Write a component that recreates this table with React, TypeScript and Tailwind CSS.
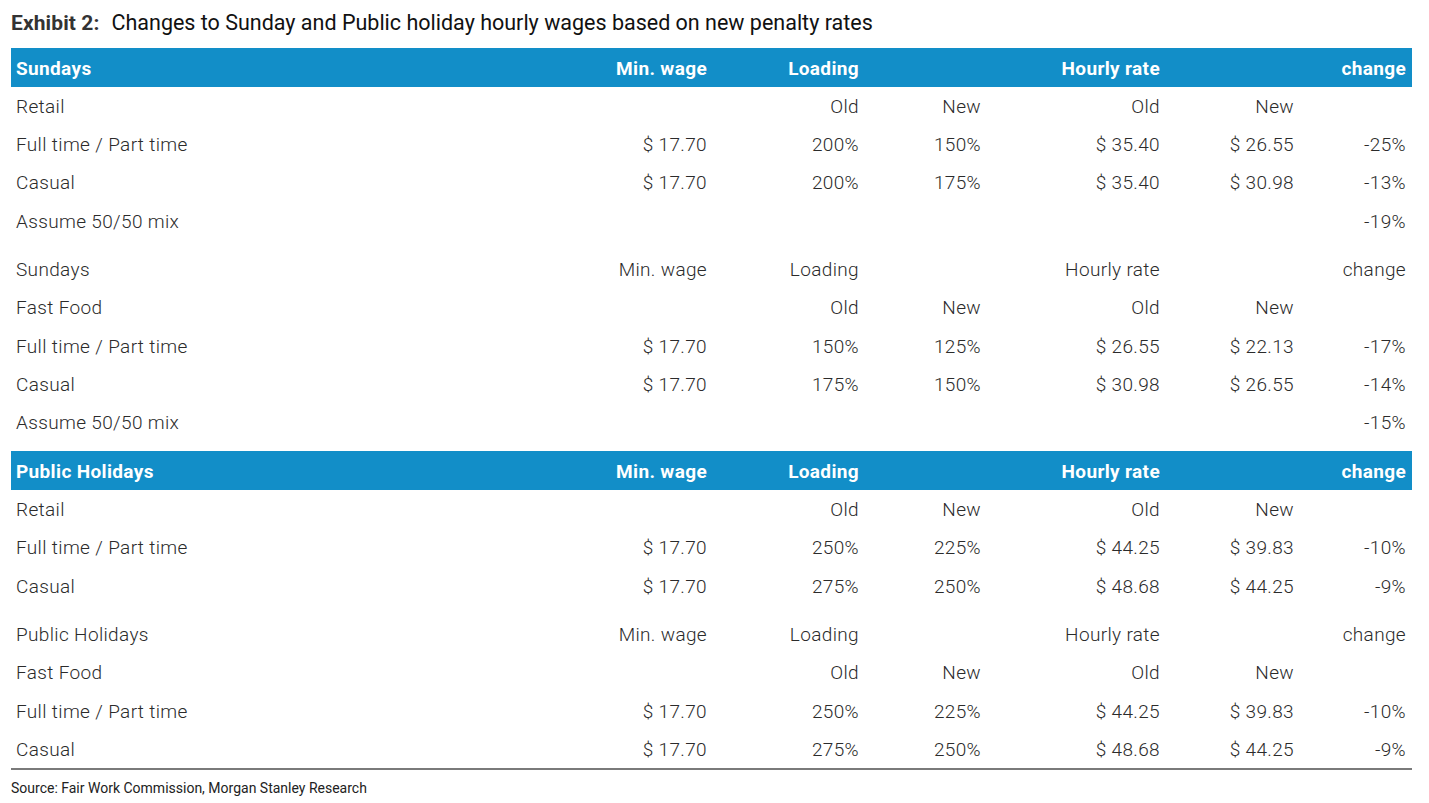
import React from "react";

type Row = { label: string; cells: string[] };

const COLS = "grid grid-cols-[minmax(0,1fr)_140px_152px_122px_179px_134px_112px] pl-[5px] pr-[6px] pt-[3px]";

const HEAD = ["Min. wage", "Loading", "", "Hourly rate", "", "change"];
const SUB = ["", "Old", "New", "Old", "New", ""];

const sections: { title: string; groups: { heading?: string; rows: Row[] }[] }[] = [
  {
    title: "Sundays",
    groups: [
      {
        rows: [
          { label: "Retail", cells: SUB },
          { label: "Full time / Part time", cells: ["$ 17.70", "200%", "150%", "$ 35.40", "$ 26.55", "-25%"] },
          { label: "Casual", cells: ["$ 17.70", "200%", "175%", "$ 35.40", "$ 30.98", "-13%"] },
          { label: "Assume 50/50 mix", cells: ["", "", "", "", "", "-19%"] },
        ],
      },
      {
        heading: "Sundays",
        rows: [
          { label: "Fast Food", cells: SUB },
          { label: "Full time / Part time", cells: ["$ 17.70", "150%", "125%", "$ 26.55", "$ 22.13", "-17%"] },
          { label: "Casual", cells: ["$ 17.70", "175%", "150%", "$ 30.98", "$ 26.55", "-14%"] },
          { label: "Assume 50/50 mix", cells: ["", "", "", "", "", "-15%"] },
        ],
      },
    ],
  },
  {
    title: "Public Holidays",
    groups: [
      {
        rows: [
          { label: "Retail", cells: SUB },
          { label: "Full time / Part time", cells: ["$ 17.70", "250%", "225%", "$ 44.25", "$ 39.83", "-10%"] },
          { label: "Casual", cells: ["$ 17.70", "275%", "250%", "$ 48.68", "$ 44.25", "-9%"] },
        ],
      },
      {
        heading: "Public Holidays",
        rows: [
          { label: "Fast Food", cells: SUB },
          { label: "Full time / Part time", cells: ["$ 17.70", "250%", "225%", "$ 44.25", "$ 39.83", "-10%"] },
          { label: "Casual", cells: ["$ 17.70", "275%", "250%", "$ 48.68", "$ 44.25", "-9%"] },
        ],
      },
    ],
  },
];

function TableRow({ label, cells, bold }: { label: string; cells: string[]; bold?: boolean }) {
  return (
    <div
      className={`${COLS} items-center ${
        bold ? "h-[38.5px] bg-[#128ec8] font-bold text-white" : "h-[38.3px] font-light text-[#2b2b2b]"
      }`}
    >
      <div className="whitespace-nowrap">{label}</div>
      {cells.map((c, i) => (
        <div key={i} className="whitespace-nowrap text-right">
          {c}
        </div>
      ))}
    </div>
  );
}

export default function App() {
  return (
    <div className="min-h-[803px] w-[1429px] bg-white font-['Roboto',sans-serif]">
      <div className="w-[1412px] pl-[11px]">
        <h1 className="flex h-[46px] items-center whitespace-nowrap pt-[1px]">
          <span className="text-[21px] font-bold tracking-[0.1px] text-[#333]">Exhibit 2:</span>
          <span className="ml-[12px] text-[21.5px] text-[#111]">
            Changes to Sunday and Public holiday hourly wages based on new penalty rates
          </span>
        </h1>

        <div className="text-[19px] tracking-[0.35px]">
          {sections.map((s, si) => (
            <div key={s.title} className={si > 0 ? "mt-[10px]" : "mt-[2px]"}>
              <TableRow label={s.title} cells={HEAD} bold />
              {s.groups.map((g, gi) => (
                <div key={gi} className={gi > 0 ? "mt-[10px]" : ""}>
                  {g.heading && <TableRow label={g.heading} cells={HEAD} />}
                  {g.rows.map((r, ri) => (
                    <TableRow key={ri} label={r.label} cells={r.cells} />
                  ))}
                </div>
              ))}
            </div>
          ))}
          <div className="h-[2px] bg-[#7a7a7a]" />
        </div>

        <p className="pt-[8px] text-[14px] text-[#222]">Source: Fair Work Commission, Morgan Stanley Research</p>
      </div>
    </div>
  );
}
